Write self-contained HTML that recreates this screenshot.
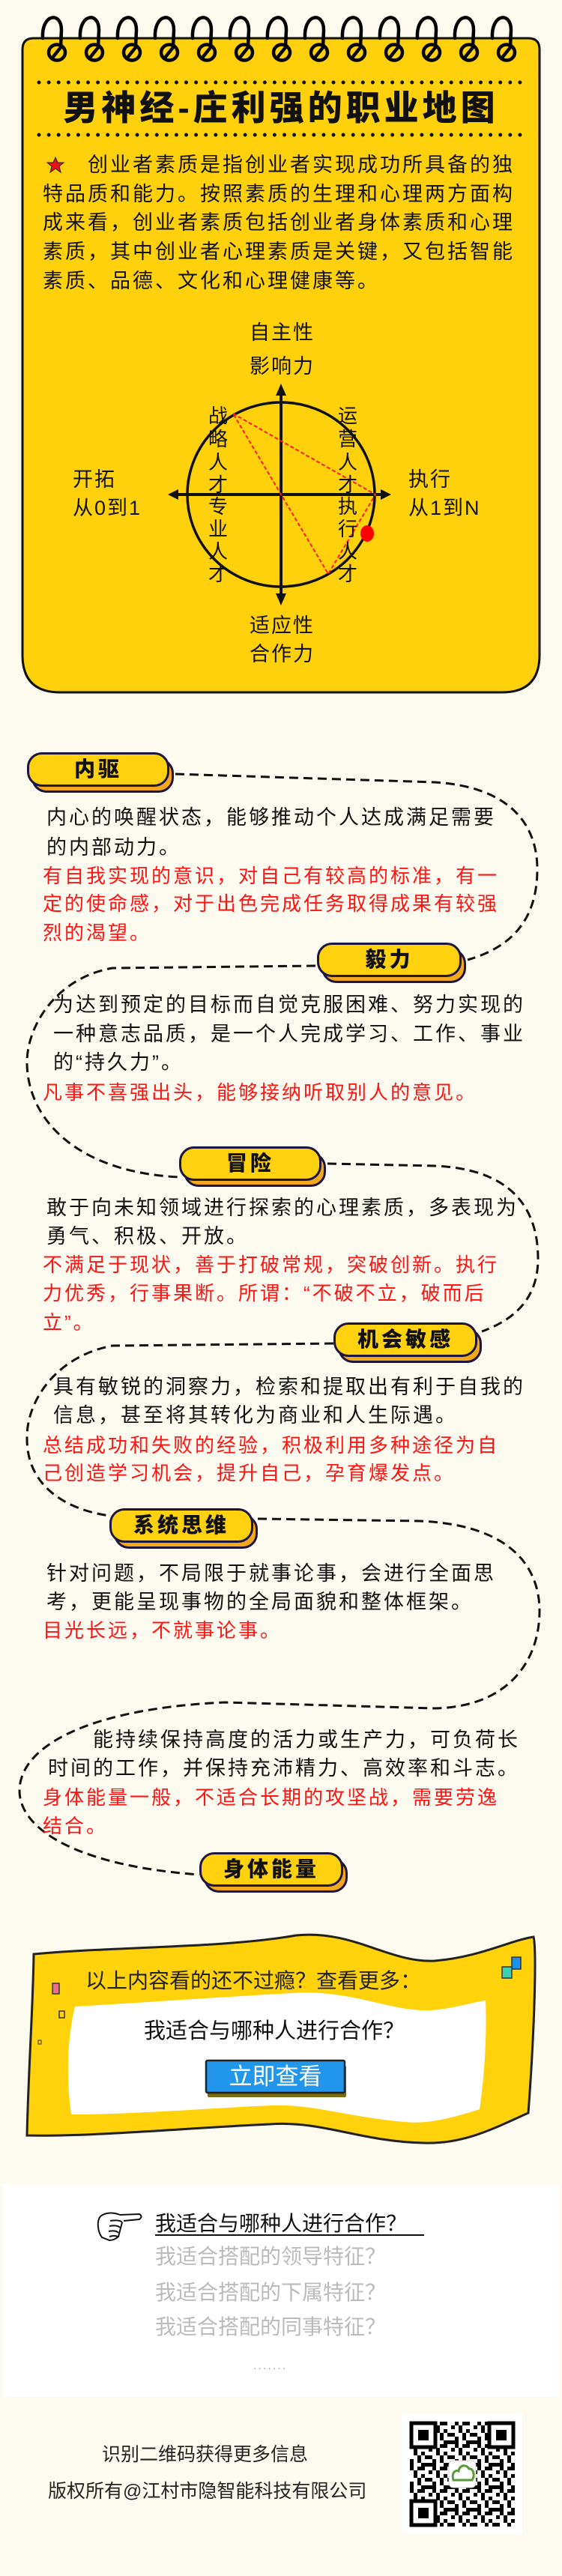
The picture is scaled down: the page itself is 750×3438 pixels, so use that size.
<!DOCTYPE html>
<html><head><meta charset="utf-8">
<style>
*{margin:0;padding:0;box-sizing:border-box}
html,body{width:750px;height:3438px;background:#fdfbef;overflow:hidden}
body{position:relative;font-family:"Liberation Sans","Noto Sans CJK SC",sans-serif;color:#111}
.a{position:absolute;white-space:nowrap}
.t{font-size:27px;letter-spacing:3px;height:40px;line-height:40px}
.r{color:#ff1414;font-size:26px;letter-spacing:3px;height:40px;line-height:40px}
.d{font-size:27px;letter-spacing:2px;height:36px;line-height:36px}
.v{font-size:26px;height:30px;line-height:30px;width:30px;text-align:center}
.tag{position:absolute;height:46px}
.tag .s{position:absolute;left:6px;top:8px;right:-6px;bottom:-8px;background:#f3a81e;border:3px solid #1d1640;border-radius:20px}
.tag .m{position:absolute;left:0;top:0;right:0;bottom:0;background:#ffd10f;border:3px solid #1d1640;border-radius:20px;font-size:28px;font-weight:900;letter-spacing:4px;text-align:center;line-height:40px}
.g{font-size:28px;color:#bbb;height:40px;line-height:40px}
</style></head><body>
<svg class="a" style="left:0;top:0" width="750" height="3438" viewBox="0 0 750 3438">
<defs>
<pattern id="qr" width="30" height="30" patternUnits="userSpaceOnUse" x="547" y="3232">
<rect x="0" y="0" width="5" height="5"/><rect x="10" y="0" width="10" height="5"/><rect x="25" y="5" width="5" height="5"/><rect x="5" y="5" width="5" height="10"/><rect x="15" y="10" width="5" height="5"/><rect x="20" y="15" width="10" height="5"/><rect x="0" y="20" width="5" height="10"/><rect x="10" y="20" width="5" height="5"/><rect x="15" y="25" width="10" height="5"/><rect x="10" y="15" width="5" height="5"/><rect x="25" y="25" width="5" height="5"/>
</pattern>
</defs>
<!-- card -->
<path d="M30,66 Q30,51 45,51 L705,51 Q720,51 720,66 L720,874 Q720,924 670,924 L80,924 Q30,924 30,874 Z" fill="#ffd10c" stroke="#111" stroke-width="3"/>
<!-- rings -->
<g fill="none" stroke="#000" stroke-width="4.5" stroke-linecap="round">
<g id="ring"><path d="M57,51 C55,18 82,15 82,40 L81,62"/><ellipse cx="76" cy="70" rx="11" ry="10.5"/><path d="M70,77 L82,62"/></g>
<use href="#ring" x="50"/><use href="#ring" x="100"/><use href="#ring" x="150"/><use href="#ring" x="200"/><use href="#ring" x="250"/><use href="#ring" x="300"/><use href="#ring" x="350"/><use href="#ring" x="400"/><use href="#ring" x="450"/><use href="#ring" x="500"/><use href="#ring" x="550"/><use href="#ring" x="600"/>
</g>
<!-- dotted -->
<line x1="52" y1="110" x2="706" y2="110" stroke="#111" stroke-width="5" stroke-dasharray="0 13.1" stroke-linecap="round"/>
<line x1="52" y1="180" x2="706" y2="180" stroke="#111" stroke-width="5" stroke-dasharray="0 13.1" stroke-linecap="round"/>
<!-- star -->
<path d="M74,210 L77,217 L85,217 L79,222 L81,230 L74,225 L67,230 L69,222 L63,217 L71,217 Z" fill="#e8101a" stroke="#222" stroke-width="1"/>
<!-- diagram -->
<ellipse cx="375" cy="660" rx="125" ry="123" fill="none" stroke="#111" stroke-width="3.5"/>
<line x1="375" y1="522" x2="375" y2="798" stroke="#111" stroke-width="4"/>
<line x1="232" y1="660" x2="514" y2="660" stroke="#111" stroke-width="4"/>
<path d="M375,512 L368,528 L382,528 Z M375,808 L368,792 L382,792 Z M224,660 L238,653 L238,667 Z M522,660 L508,653 L508,667 Z" fill="#111"/>
<path d="M311,552 L501,660 L438,766 Z" fill="none" stroke="#ff1a1a" stroke-width="2" stroke-dasharray="5 3"/>
<ellipse cx="490" cy="712" rx="9" ry="11" fill="#ff0000"/>
<!-- dashed paths -->
<g fill="none" stroke="#111" stroke-width="3" stroke-dasharray="12 7">
<path d="M234,1033 L580,1044 C680,1050 717,1100 717,1160 C717,1230 680,1265 624,1281"/>
<path d="M421,1289 L150,1292 C75,1305 35,1370 36,1420 C38,1500 110,1565 239,1571"/>
<path d="M437,1553 L580,1556 C680,1560 718,1610 718,1680 C718,1730 690,1760 643,1777"/>
<path d="M445,1793 L150,1796 C75,1810 35,1870 36,1920 C36,1985 90,2015 146,2023"/>
<path d="M344,2027 L560,2030 C680,2035 720,2090 720,2150 C720,2215 680,2278 580,2280 L300,2272 C120,2280 26,2330 26,2390 C26,2440 100,2490 266,2502"/>
</g>
<!-- banner -->
<path d="M45,2608 C150,2598 300,2600 395,2583 C470,2575 520,2620 580,2617 C640,2612 680,2590 712,2585 C716,2600 714,2700 705,2820 C660,2840 620,2862 565,2860 C480,2858 430,2830 360,2835 C250,2840 120,2852 36,2850 C38,2760 44,2680 45,2608 Z" fill="#ffd20c" stroke="#222" stroke-width="3"/>
<path d="M100,2678 C200,2672 300,2665 390,2660 C470,2655 520,2685 575,2683 C610,2680 630,2672 648,2670 C650,2730 645,2780 640,2815 C600,2828 570,2835 540,2832 C460,2825 420,2808 360,2810 C260,2815 170,2822 95,2822 C88,2770 90,2720 100,2678 Z" fill="#fff"/>
<rect x="70" y="2647" width="9" height="14" fill="#f06a8a" stroke="#333" stroke-width="1.5"/>
<rect x="79" y="2684" width="7" height="9" fill="none" stroke="#333" stroke-width="1.5"/>
<rect x="51" y="2723" width="4" height="5" fill="none" stroke="#333" stroke-width="1"/>
<rect x="683" y="2612" width="12" height="16" fill="#1e90e8" stroke="#333" stroke-width="1.5"/>
<rect x="670" y="2625" width="13" height="15" fill="#3ad0b0" stroke="#333" stroke-width="1.5"/>
<rect x="277" y="2757" width="185" height="42" rx="2" fill="#7a6a10"/>
<rect x="275" y="2750" width="185" height="43" rx="2" fill="#2196ea" stroke="#222" stroke-width="2.5"/>
<!-- white panel -->
<rect x="4" y="2915" width="742" height="284" fill="#fff"/>
<!-- hand -->
<g fill="none" stroke="#111" stroke-width="2">
<path d="M160,2956 L186,2955 Q191,2958 186,2962 L165,2964"/>
<path d="M160,2956 C150,2952 140,2953 134,2958 C129,2964 130,2978 136,2986 L146,2990 C150,2990 155,2988 158,2985 L163,2966"/>
<path d="M147,2964 Q160,2962 163,2966 M146,2971 Q157,2969 160,2973 M145,2978 Q155,2976 158,2980 M146,2985 Q153,2983 157,2985"/>
</g>
<line x1="207" y1="2983" x2="566" y2="2983" stroke="#111" stroke-width="2"/>
<!-- qr -->
<rect x="536" y="3221" width="161" height="160" fill="#fff"/>
<rect x="547" y="3232" width="140" height="140" fill="url(#qr)"/>
<g>
<rect x="547" y="3232" width="36" height="36" fill="#fff"/><rect x="549" y="3234" width="32" height="32" fill="none" stroke="#000" stroke-width="5"/><rect x="558" y="3243" width="14" height="14" fill="#000"/>
<rect x="651" y="3232" width="36" height="36" fill="#fff"/><rect x="653" y="3234" width="32" height="32" fill="none" stroke="#000" stroke-width="5"/><rect x="662" y="3243" width="14" height="14" fill="#000"/>
<rect x="547" y="3336" width="36" height="36" fill="#fff"/><rect x="549" y="3338" width="32" height="32" fill="none" stroke="#000" stroke-width="5"/><rect x="558" y="3347" width="14" height="14" fill="#000"/>
<rect x="599" y="3284" width="36" height="36" rx="6" fill="#fff" stroke="#ccc"/>
<path d="M605,3310 C602,3300 608,3296 612,3298 C613,3290 622,3288 626,3295 C632,3294 634,3304 630,3310 Z" fill="none" stroke="#5a9a3a" stroke-width="3"/>
</g>
</svg>

<!-- title -->
<div class="a" style="left:0;width:750px;top:116px;text-align:center;font-size:46px;font-weight:900;letter-spacing:5px;line-height:56px">男神经-庄利强的职业地图</div>
<!-- intro -->
<div class="a t" style="left:117px;top:200px">创业者素质是指创业者实现成功所具备的独</div>
<div class="a t" style="left:57px;top:239px">特品质和能力。按照素质的生理和心理两方面构</div>
<div class="a t" style="left:57px;top:277px">成来看，创业者素质包括创业者身体素质和心理</div>
<div class="a t" style="left:57px;top:316px">素质，其中创业者心理素质是关键，又包括智能</div>
<div class="a t" style="left:57px;top:355px">素质、品德、文化和心理健康等。</div>
<!-- diagram labels -->
<div class="a d" style="left:333px;top:426px">自主性</div>
<div class="a d" style="left:333px;top:471px">影响力</div>
<div class="a d" style="left:97px;top:622px">开拓</div>
<div class="a d" style="left:97px;top:660px">从0到1</div>
<div class="a d" style="left:545px;top:622px">执行</div>
<div class="a d" style="left:545px;top:660px">从1到N</div>
<div class="a d" style="left:333px;top:817px">适应性</div>
<div class="a d" style="left:333px;top:855px">合作力</div>
<div class="a v" style="left:276px;top:540px">战</div><div class="a v" style="left:276px;top:571px">略</div><div class="a v" style="left:276px;top:602px">人</div><div class="a v" style="left:276px;top:632px">才</div>
<div class="a v" style="left:276px;top:661px">专</div><div class="a v" style="left:276px;top:691px">业</div><div class="a v" style="left:276px;top:721px">人</div><div class="a v" style="left:276px;top:751px">才</div>
<div class="a v" style="left:449px;top:540px">运</div><div class="a v" style="left:449px;top:571px">营</div><div class="a v" style="left:449px;top:602px">人</div><div class="a v" style="left:449px;top:632px">才</div>
<div class="a v" style="left:449px;top:661px">执</div><div class="a v" style="left:449px;top:691px">行</div><div class="a v" style="left:449px;top:721px">人</div><div class="a v" style="left:449px;top:751px">才</div>

<!-- tags -->
<div class="tag" style="left:36px;top:1004px;width:190px"><div class="s"></div><div class="m">内驱</div></div>
<div class="tag" style="left:423px;top:1258px;width:193px"><div class="s"></div><div class="m">毅力</div></div>
<div class="tag" style="left:239px;top:1530px;width:190px"><div class="s"></div><div class="m">冒险</div></div>
<div class="tag" style="left:445px;top:1765px;width:192px"><div class="s"></div><div class="m">机会敏感</div></div>
<div class="tag" style="left:146px;top:2013px;width:192px"><div class="s"></div><div class="m">系统思维</div></div>
<div class="tag" style="left:266px;top:2472px;width:192px"><div class="s"></div><div class="m">身体能量</div></div>

<!-- sections -->
<div class="a t" style="left:62px;top:1071px">内心的唤醒状态，能够推动个人达成满足需要</div>
<div class="a t" style="left:62px;top:1111px">的内部动力。</div>
<div class="a r" style="left:57px;top:1149px">有自我实现的意识，对自己有较高的标准，有一</div>
<div class="a r" style="left:57px;top:1186px">定的使命感，对于出色完成任务取得成果有较强</div>
<div class="a r" style="left:57px;top:1225px">烈的渴望。</div>

<div class="a t" style="left:71px;top:1321px">为达到预定的目标而自觉克服困难、努力实现的</div>
<div class="a t" style="left:71px;top:1360px">一种意志品质，是一个人完成学习、工作、事业</div>
<div class="a t" style="left:71px;top:1398px">的“持久力”。</div>
<div class="a r" style="left:57px;top:1438px">凡事不喜强出头，能够接纳听取别人的意见。</div>

<div class="a t" style="left:62px;top:1592px">敢于向未知领域进行探索的心理素质，多表现为</div>
<div class="a t" style="left:62px;top:1630px">勇气、积极、开放。</div>
<div class="a r" style="left:57px;top:1668px">不满足于现状，善于打破常规，突破创新。执行</div>
<div class="a r" style="left:57px;top:1706px">力优秀，行事果断。所谓：“不破不立，破而后</div>
<div class="a r" style="left:57px;top:1745px">立”。</div>

<div class="a t" style="left:71px;top:1831px">具有敏锐的洞察力，检索和提取出有利于自我的</div>
<div class="a t" style="left:71px;top:1869px">信息，甚至将其转化为商业和人生际遇。</div>
<div class="a r" style="left:57px;top:1909px">总结成功和失败的经验，积极利用多种途径为自</div>
<div class="a r" style="left:57px;top:1946px">己创造学习机会，提升自己，孕育爆发点。</div>

<div class="a t" style="left:62px;top:2080px">针对问题，不局限于就事论事，会进行全面思</div>
<div class="a t" style="left:62px;top:2118px">考，更能呈现事物的全局面貌和整体框架。</div>
<div class="a r" style="left:57px;top:2156px">目光长远，不就事论事。</div>

<div class="a t" style="left:124px;top:2302px">能持续保持高度的活力或生产力，可负荷长</div>
<div class="a t" style="left:64px;top:2340px">时间的工作，并保持充沛精力、高效率和斗志。</div>
<div class="a r" style="left:57px;top:2379px">身体能量一般，不适合长期的攻坚战，需要劳逸</div>
<div class="a r" style="left:57px;top:2417px">结合。</div>

<!-- banner text -->
<div class="a" style="left:114px;top:2626px;font-size:28px;line-height:36px;color:#222">以上内容看的还不过瘾？查看更多：</div>
<div class="a" style="left:192px;top:2693px;font-size:29px;line-height:36px;color:#111">我适合与哪种人进行合作？</div>
<div class="a" style="left:275px;top:2750px;width:185px;text-align:center;font-size:31px;line-height:43px;color:#fff">立即查看</div>

<!-- panel -->
<div class="a" style="left:207px;top:2948px;font-size:28px;line-height:40px;color:#111">我适合与哪种人进行合作？</div>
<div class="a g" style="left:207px;top:2992px">我适合搭配的领导特征？</div>
<div class="a g" style="left:207px;top:3040px">我适合搭配的下属特征？</div>
<div class="a g" style="left:207px;top:3086px">我适合搭配的同事特征？</div>
<div class="a" style="left:338px;top:3148px;font-size:16px;letter-spacing:2px;color:#aaa;line-height:20px">.......</div>

<div class="a" style="left:136px;top:3258px;font-size:25px;line-height:36px;color:#222">识别二维码获得更多信息</div>
<div class="a" style="left:64px;top:3307px;font-size:25px;line-height:36px;color:#222">版权所有@江村市隐智能科技有限公司</div>
</body></html>
